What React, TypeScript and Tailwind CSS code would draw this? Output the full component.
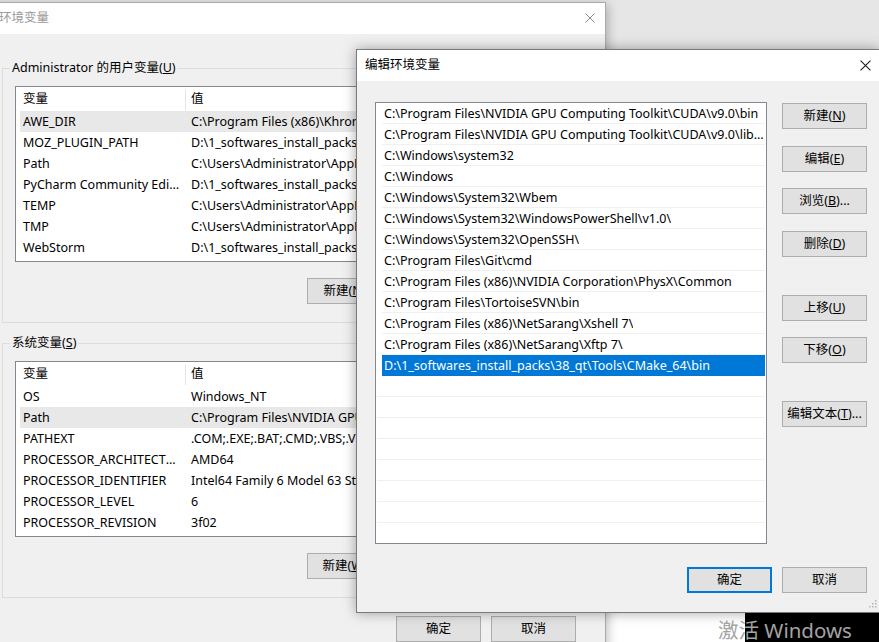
import React from 'react';

const userVars: [string, string][] = [
  ['AWE_DIR', 'C:\\Program Files (x86)\\Khronos\\AWE\\'],
  ['MOZ_PLUGIN_PATH', 'D:\\1_softwares_install_packs\\Foxit\\plugins\\'],
  ['Path', 'C:\\Users\\Administrator\\AppData\\Local\\Microsoft\\WindowsApps;'],
  ['PyCharm Community Edition', 'D:\\1_softwares_install_packs\\PyCharm\\bin;'],
  ['TEMP', 'C:\\Users\\Administrator\\AppData\\Local\\Temp'],
  ['TMP', 'C:\\Users\\Administrator\\AppData\\Local\\Temp'],
  ['WebStorm', 'D:\\1_softwares_install_packs\\WebStorm\\bin;'],
];

const sysVars: [string, string][] = [
  ['OS', 'Windows_NT'],
  ['Path', 'C:\\Program Files\\NVIDIA GPU Computing Toolkit\\CUDA\\v9.0\\bin;'],
  ['PATHEXT', '.COM;.EXE;.BAT;.CMD;.VBS;.VBE;.JS;.JSE;.WSF;.WSH;.MSC'],
  ['PROCESSOR_ARCHITECTURE', 'AMD64'],
  ['PROCESSOR_IDENTIFIER', 'Intel64 Family 6 Model 63 Stepping 2, GenuineIntel'],
  ['PROCESSOR_LEVEL', '6'],
  ['PROCESSOR_REVISION', '3f02'],
];

const paths = [
  'C:\\Program Files\\NVIDIA GPU Computing Toolkit\\CUDA\\v9.0\\bin',
  'C:\\Program Files\\NVIDIA GPU Computing Toolkit\\CUDA\\v9.0\\libnvvp',
  'C:\\Windows\\system32',
  'C:\\Windows',
  'C:\\Windows\\System32\\Wbem',
  'C:\\Windows\\System32\\WindowsPowerShell\\v1.0\\',
  'C:\\Windows\\System32\\OpenSSH\\',
  'C:\\Program Files\\Git\\cmd',
  'C:\\Program Files (x86)\\NVIDIA Corporation\\PhysX\\Common',
  'C:\\Program Files\\TortoiseSVN\\bin',
  'C:\\Program Files (x86)\\NetSarang\\Xshell 7\\',
  'C:\\Program Files (x86)\\NetSarang\\Xftp 7\\',
  'D:\\1_softwares_install_packs\\38_qt\\Tools\\CMake_64\\bin',
];

function Btn({ children, primary }: { children: React.ReactNode; primary?: boolean }) {
  return (
    <div
      className={
        primary
          ? 'flex h-[26px] w-[85px] shrink-0 items-center justify-center border-2 border-[#0078d7] bg-[#e1e1e1] pt-[1px] text-black'
          : 'flex h-[26px] w-[85px] shrink-0 items-center justify-center border border-[#adadad] bg-[#e1e1e1] pt-[1px] text-black'
      }
    >
      {children}
    </div>
  );
}

function CloseX({ color, size }: { color: string; size: number }) {
  return (
    <svg width={size} height={size} viewBox="0 0 10 10" className="shrink-0">
      <path d="M0.5 0.5 L9.5 9.5 M9.5 0.5 L0.5 9.5" stroke={color} strokeWidth="1" fill="none" />
    </svg>
  );
}

function VarTable({ rows, selected }: { rows: [string, string][]; selected: number }) {
  return (
    <div className="h-[176px] w-[569px] overflow-hidden border border-[#828790] bg-white">
      <div className="ml-[4px] grid h-[24px] grid-cols-[165px_1fr] items-center pt-[1px]">
        <div className="pl-[3px]">变量</div>
        <div className="flex h-[20px] items-center border-l border-[#e5e5e5] pl-[5px]">值</div>
      </div>
      {rows.map(([k, v], i) => (
        <div
          key={k}
          className={
            i === selected
              ? 'ml-[4px] grid h-[21px] grid-cols-[165px_1fr] items-center bg-[#e8e8e8] pt-[1px]'
              : 'ml-[4px] grid h-[21px] grid-cols-[165px_1fr] items-center pt-[1px]'
          }
        >
          <div className="truncate pl-[3px] pr-[4px]">{k}</div>
          <div className="truncate whitespace-nowrap pl-[6px]">{v}</div>
        </div>
      ))}
    </div>
  );
}

function GroupBox({
  label,
  rows,
  selected,
  btns,
  className,
}: {
  label: React.ReactNode;
  rows: [string, string][];
  selected: number;
  btns: React.ReactNode[];
  className: string;
}) {
  return (
    <div className={className}>
      <span className="absolute left-[7px] top-[-9px] bg-[#f0f0f0] px-[2px] leading-[16px]">{label}</span>
      <VarTable rows={rows} selected={selected} />
      <div className="mt-[16px] flex justify-end gap-[10px] pr-[15px]">
        {btns.map((b, i) => (
          <Btn key={i}>{b}</Btn>
        ))}
      </div>
    </div>
  );
}

export default function App() {
  const emptyRows = Array.from({ length: 9 });
  return (
    <div className="relative h-[642px] w-[879px] overflow-hidden bg-[#e6e6e6] font-['Noto_Sans','Noto_Sans_CJK_SC',sans-serif] text-[12.5px] text-black">
      {/* desktop bits at bottom right */}
      <div className="absolute left-[606px] top-[600px] h-[42px] w-[139px] bg-white" />
      <div className="absolute left-[745px] top-[600px] h-[42px] w-[134px] bg-black" />

      {/* background window: 环境变量 */}
      <div className="absolute left-[-9px] top-[2px] h-[660px] w-[615px] border border-[#aaaaaa] bg-[#f0f0f0] shadow-[2px_2px_10px_rgba(0,0,0,0.25)]">
        <div className="flex h-[31px] items-center bg-white pl-[7px] text-[#999999]">
          <span className="mb-[1px]">环境变量</span>
          <span className="ml-auto mr-[10px] mb-[2px]">
            <CloseX color="#8a8a8a" size={10} />
          </span>
        </div>
        <div className="flex flex-col pl-[10px]">
          <GroupBox
            className="relative mt-[34px] h-[255px] w-[596px] border border-[#dcdcdc] pl-[12px] pt-[17px]"
            label={
              <>
                Administrator 的用户变量(<u>U</u>)
              </>
            }
            rows={userVars}
            selected={0}
            btns={[
              <>
                新建(<u>N</u>)...
              </>,
              <>
                编辑(<u>E</u>)...
              </>,
              <>
                删除(<u>D</u>)
              </>,
            ]}
          />
          <GroupBox
            className="relative mt-[20px] h-[255px] w-[596px] border border-[#dcdcdc] pl-[12px] pt-[17px]"
            label={
              <>
                系统变量(<u>S</u>)
              </>
            }
            rows={sysVars}
            selected={1}
            btns={[
              <>
                新建(<u>W</u>)...
              </>,
              <>
                编辑(<u>I</u>)...
              </>,
              <>
                删除(<u>L</u>)
              </>,
            ]}
          />
          <div className="mt-[18px] flex w-[598px] justify-end gap-[10px] pr-[24px]">
            <Btn>确定</Btn>
            <Btn>取消</Btn>
          </div>
        </div>
      </div>

      {/* dialog: 编辑环境变量 */}
      <div className="absolute left-[356px] top-[49px] flex h-[564px] w-[524px] flex-col border border-[#7a7a7a] bg-[#f0f0f0] shadow-[0_0_12px_rgba(0,0,0,0.35)]">
        <div className="flex h-[31px] shrink-0 items-center bg-white pl-[8px]">
          <span>编辑环境变量</span>
          <span className="ml-auto mr-[8px]">
            <CloseX color="#1a1a1a" size={11} />
          </span>
        </div>
        <div className="flex flex-col pl-[18px] pr-[12px] pt-[21px]">
          <div className="flex">
            <div className="h-[442px] w-[392px] overflow-hidden border border-[#828790] bg-white">
              {paths.map((p, i) =>
                i === paths.length - 1 ? (
                  <div
                    key={p}
                    className="ml-[6px] mr-[1px] flex h-[21px] items-center border-b border-[#0078d7] bg-[#0078d7] pl-[2px] pt-[2px] whitespace-nowrap text-white"
                  >
                    {p}
                  </div>
                ) : (
                  <div
                    key={p}
                    className="ml-[6px] mr-[1px] flex h-[21px] items-center border-b border-[#f0f0f0] pl-[2px] pt-[2px] whitespace-nowrap"
                  >
                    <span className="truncate">{p}</span>
                  </div>
                )
              )}
              {emptyRows.map((_, i) => (
                <div key={i} className="ml-[1px] mr-[1px] h-[21px] border-b border-[#f0f0f0]" />
              ))}
            </div>
            <div className="ml-[15px] flex flex-col pt-[1px]">
              <Btn>
                新建(<u>N</u>)
              </Btn>
              <div className="mt-[17px]">
                <Btn>
                  编辑(<u>E</u>)
                </Btn>
              </div>
              <div className="mt-[16px]">
                <Btn>
                  浏览(<u>B</u>)...
                </Btn>
              </div>
              <div className="mt-[17px]">
                <Btn>
                  删除(<u>D</u>)
                </Btn>
              </div>
              <div className="mt-[38px]">
                <Btn>
                  上移(<u>U</u>)
                </Btn>
              </div>
              <div className="mt-[16px]">
                <Btn>
                  下移(<u>O</u>)
                </Btn>
              </div>
              <div className="mt-[38px]">
                <Btn>
                  编辑文本(<u>T</u>)...
                </Btn>
              </div>
            </div>
          </div>
          <div className="mt-[23px] flex justify-end gap-[10px]">
            <Btn primary>确定</Btn>
            <Btn>取消</Btn>
          </div>
        </div>
        <svg width="10" height="10" viewBox="0 0 10 10" className="absolute bottom-[2px] right-[2px]">
          <rect x="8" y="0" width="1.5" height="1.5" fill="#b5b5b5" />
          <rect x="5" y="3" width="1.5" height="1.5" fill="#b5b5b5" />
          <rect x="8" y="3" width="1.5" height="1.5" fill="#b5b5b5" />
          <rect x="2" y="6" width="1.5" height="1.5" fill="#b5b5b5" />
          <rect x="5" y="6" width="1.5" height="1.5" fill="#b5b5b5" />
          <rect x="8" y="6" width="1.5" height="1.5" fill="#b5b5b5" />
        </svg>
      </div>

      {/* activation watermark */}
      <div className="pointer-events-none absolute left-[718px] top-[615px] whitespace-nowrap text-[20.5px] leading-[30px] text-[#a3a3a3]">
        激活 Windows
      </div>
    </div>
  );
}
